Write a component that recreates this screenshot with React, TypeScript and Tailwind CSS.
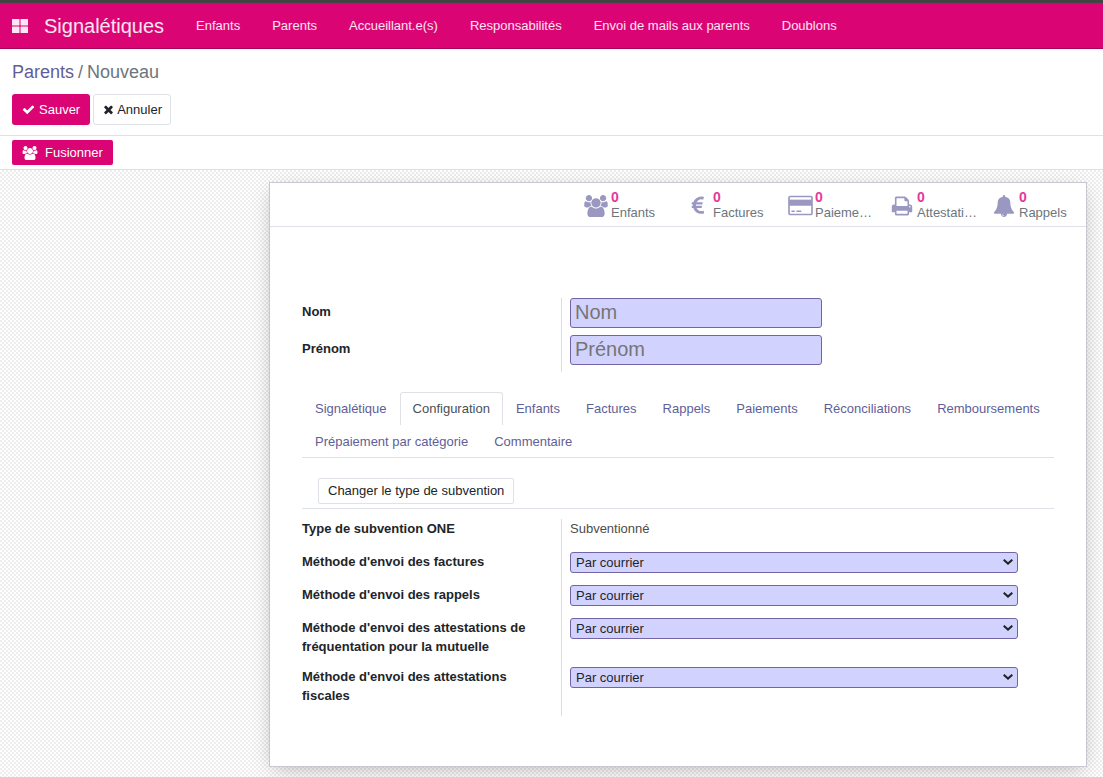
import React from "react";

type IconProps = { className?: string };

const USERS =
  "M657 896q-162 5-265 128h-134q-82 0-138-40.5t-56-118.5q0-353 124-353 6 0 43.5 21t97.5 42.5 119 21.5q67 0 133-23-5 37-5 66 0 139 81 256zm1071 637q0 120-73 189.5t-194 69.5h-874q-121 0-194-69.5t-73-189.5q0-53 3.5-103.5t14-109 26.5-108.5 43-97.5 62-81 85.5-53.5 111.5-20q10 0 43 21.5t73 48 107 48 135 21.5 135-21.5 107-48 73-48 43-21.5q61 0 111.5 20t85.5 53.5 62 81 43 97.5 26.5 108.5 14 109 3.5 103.5zm-1024-1277q0 106-75 181t-181 75-181-75-75-181 75-181 181-75 181 75 75 181zm704 384q0 159-112.5 271.5t-271.5 112.5-271.5-112.5-112.5-271.5 112.5-271.5 271.5-112.5 271.5 112.5 112.5 271.5zm576 225q0 78-56 118.5t-138 40.5h-134q-103-123-265-128 81-117 81-256 0-29-5-66 66 23 133 23 59 0 119-21.5t97.5-42.5 43.5-21q124 0 124 353zm-128-609q0 106-75 181t-181 75-181-75-75-181 75-181 181-75 181 75 75 181z";
const CHECK =
  "M1671 566q0 40-28 68l-724 724-136 136q-28 28-68 28t-68-28l-136-136-362-362q-28-28-28-68t28-68l136-136q28-28 68-28t68 28l294 295 656-657q28-28 68-28t68 28l136 136q28 28 28 68z";
const TIMES =
  "M1490 1322q0 40-28 68l-136 136q-28 28-68 28t-68-28l-294-294-294 294q-28 28-68 28t-68-28l-136-136q-28-28-28-68t28-68l294-294-294-294q-28-28-28-68t28-68l136-136q28-28 68-28t68 28l294 294 294-294q28-28 68-28t68 28l136 136q28 28 28 68t-28 68l-294 294 294 294q28 28 28 68z";
const EURO =
  "M1360 1307l35 159q3 12-3 22.5t-17 14.5l-5 1q-4 2-10.5 3.5t-16 4.5-21.5 5.5-25.5 5-30 5-33.5 4.5-36.5 3-38.5 1q-234 0-409-130.5t-238-351.5h-95q-13 0-22.5-9.5t-9.5-22.5v-113q0-13 9.5-22.5t22.5-9.5h66q-2-57 1-105h-67q-14 0-23-9t-9-23v-114q0-14 9-23t23-9h98q67-210 243.5-338t400.5-128q102 0 194 23 11 3 20 15 6 11 3 24l-43 159q-3 13-14 19.5t-24 2.5l-4-1q-4-1-11.5-2.5l-17.5-3.5-22.5-3.5-26-3-29-2.5-29.5-1q-126 0-226 64t-150 176h468q16 0 25 12 10 12 7 26l-24 114q-5 26-32 26h-488q-3 37 0 105h459q15 0 25 12 9 12 6 27l-24 112q-2 11-11 18.5t-20 7.5h-387q48 117 149.5 185.5t228.5 68.5q18 0 36-1.5t33.5-3.5 29.5-4.5 24.5-5 18.5-4.5l12-3 5-2q13-5 26 2 12 7 15 21z";
const CARD =
  "M1760 128q66 0 113 47t47 113v1216q0 66-47 113t-113 47h-1600q-66 0-113-47t-47-113v-1216q0-66 47-113t113-47h1600zm-1600 128q-13 0-22.5 9.5t-9.5 22.5v224h1664v-224q0-13-9.5-22.5t-22.5-9.5h-1600zm1600 1280q13 0 22.5-9.5t9.5-22.5v-608h-1664v608q0 13 9.5 22.5t22.5 9.5h1600zm-1504-128v-128h256v128h-256zm384 0v-128h384v128h-384z";
const CARD_BAND = "M100 440h1720v456h-1720z";
const PRINT =
  "M448 1536h896v-256h-896v256zm0-640h896v-384h-160q-40 0-68-28t-28-68v-160h-640v640zm1152 64q0-26-19-45t-45-19-45 19-19 45 19 45 45 19 45-19 19-45zm128 0v416q0 13-9.5 22.5t-22.5 9.5h-224v160q0 40-28 68t-68 28h-960q-40 0-68-28t-28-68v-160h-224q-13 0-22.5-9.5t-9.5-22.5v-416q0-79 56.5-135.5t135.5-56.5h64v-544q0-40 28-68t68-28h672q40 0 88 20t76 48l152 152q28 28 48 76t20 88v256h64q79 0 135.5 56.5t56.5 135.5z";
const BELL =
  "M912 1696q0-16-16-16-59 0-101.5-42.5t-42.5-101.5q0-16-16-16t-16 16q0 73 51.5 124.5t124.5 51.5q16 0 16-16zm816-288q0 52-38 90t-90 38h-448q0 106-75 181t-181 75-181-75-75-181h-448q-52 0-90-38t-38-90q50-42 91-88t85-119.5 74.5-158.5 50-206 19.5-260q0-152 117-282.5t307-158.5q-8-19-8-39 0-40 28-68t68-28 68 28 28 68q0 20-8 39 190 28 307 158.5t117 282.5q0 139 19.5 260t50 206 74.5 158.5 85 119.5 91 88z";

function Glyph({ d, box = "0 0 1792 1792", className }: IconProps & { d: string; box?: string }) {
  return (
    <svg viewBox={box} fill="currentColor" aria-hidden="true" className={className}>
      <path d={d} />
    </svg>
  );
}

function CardIcon() {
  return (
    <svg viewBox="0 0 1920 1792" fill="currentColor" aria-hidden="true" className="h-[23px] w-[25px]">
      <path d={CARD} />
      <path d={CARD_BAND} />
    </svg>
  );
}

function AppsIcon() {
  return (
    <svg viewBox="0 0 16 14" fill="currentColor" aria-hidden="true" className="h-[14px] w-4">
      <rect x="0" y="0" width="7.5" height="6.5" rx="0.6" />
      <rect x="8.5" y="0" width="7.5" height="6.5" rx="0.6" />
      <rect x="0" y="7.5" width="7.5" height="6.5" rx="0.6" />
      <rect x="8.5" y="7.5" width="7.5" height="6.5" rx="0.6" />
    </svg>
  );
}

const menus = ["Enfants", "Parents", "Accueillant.e(s)", "Responsabilités", "Envoi de mails aux parents", "Doublons"];

const stats = [
  { label: "Enfants", icon: <Glyph d={USERS} box="0 0 2048 1792" className="h-[22px] w-[26px]" /> },
  { label: "Factures", icon: <Glyph d={EURO} className="size-[22px]" /> },
  { label: "Paiements", icon: <CardIcon /> },
  { label: "Attestations", icon: <Glyph d={PRINT} className="size-[22px]" /> },
  { label: "Rappels", icon: <Glyph d={BELL} className="size-[22px]" /> },
];

const tabs = [
  "Signalétique",
  "Configuration",
  "Enfants",
  "Factures",
  "Rappels",
  "Paiements",
  "Réconciliations",
  "Remboursements",
  "Prépaiement par catégorie",
  "Commentaire",
];

const methods = [
  { id: "factures", label: "Méthode d'envoi des factures" },
  { id: "rappels", label: "Méthode d'envoi des rappels" },
  { id: "mutuelle", label: "Méthode d'envoi des attestations de fréquentation pour la mutuelle" },
  { id: "fiscales", label: "Méthode d'envoi des attestations fiscales" },
];

function NameField({ id, label }: { id: string; label: string }) {
  return (
    <div className="flex h-[37px]">
      <label htmlFor={id} className="w-[259px] shrink-0 pt-1 font-bold">
        {label}
      </label>
      <div className="flex-1 border-l border-[#ddd] pl-2">
        <input
          id={id}
          type="text"
          placeholder={label}
          className="block h-[30px] w-[252px] rounded-[3px] border border-[#7264a5] bg-[#d2d2ff] px-1 pb-[2px] text-xl placeholder:text-[#757575]"
        />
      </div>
    </div>
  );
}

function MethodField({ id, label }: { id: string; label: string }) {
  return (
    <div className="flex min-h-[33px]">
      <label htmlFor={id} className="w-[259px] shrink-0 pr-4 pb-[11px] font-bold">
        {label}
      </label>
      <div className="flex-1 border-l border-[#ddd] pr-9 pl-2">
        <div className="relative">
          <select
            id={id}
            defaultValue="courrier"
            className="block h-[21px] w-full appearance-none rounded-[3px] border border-[#7264a5] bg-[#d2d2ff] px-[5px] leading-[19px]"
          >
            <option value="courrier">Par courrier</option>
            <option value="mail">Par mail</option>
          </select>
          <svg
            viewBox="0 0 10 6"
            fill="none"
            stroke="currentColor"
            strokeWidth="2"
            aria-hidden="true"
            className="pointer-events-none absolute top-[7px] right-[5px] h-[6px] w-[10px]"
          >
            <path d="M0.7 0.7 L5 4.6 L9.3 0.7" />
          </svg>
        </div>
      </div>
    </div>
  );
}

export default function App() {
  return (
    <div className="flex min-h-screen flex-col bg-white font-['Liberation_Sans',Arial,sans-serif] text-[13px] leading-[19px] text-[#212529]">
      <header className="flex h-[49px] items-center border-t-[3px] border-b border-t-[#434343] border-b-[#a3055c] bg-[#da0475] text-white/90">
        <button type="button" aria-label="Applications" className="pr-4 pl-3">
          <AppsIcon />
        </button>
        <a href="#signaletiques" className="pr-4 text-xl">
          Signalétiques
        </a>
        <nav className="flex">
          {menus.map((m) => (
            <a key={m} href="#menu" className="px-4">
              {m}
            </a>
          ))}
        </nav>
      </header>

      <div className="border-b border-[#dee2e6] px-3 pt-3 pb-[10px]">
        <nav className="flex gap-1 text-lg leading-[22px] text-[#6c757d]">
          <a href="#parents" className="text-[#5f5e97]">
            Parents
          </a>
          <span>/</span>
          <span>Nouveau</span>
        </nav>
        <div className="mt-[11px] flex gap-[3px]">
          <button type="button" className="flex h-[31px] items-center gap-1 rounded-[3px] bg-[#da0475] px-[10px] text-white">
            <Glyph d={CHECK} className="size-[13px]" />
            Sauver
          </button>
          <button type="button" className="flex h-[31px] items-center gap-[2px] rounded-[3px] border border-[#dee2e6] px-2">
            <Glyph d={TIMES} className="size-[13px]" />
            Annuler
          </button>
        </div>
      </div>

      <div className="border-b border-[#dee2e6] px-3 py-1">
        <button type="button" className="flex h-[25px] items-center gap-[7px] rounded-[2px] bg-[#da0475] px-[10px] text-white">
          <Glyph d={USERS} box="0 0 2048 1792" className="h-[14px] w-4" />
          Fusionner
        </button>
      </div>

      <main className="flex flex-1 justify-end bg-white bg-[repeating-conic-gradient(#ededed_0_25%,#ffffff_0_50%)] bg-[length:4px_4px] pt-3 pr-4 pb-[10px]">
        <section className="flex w-[818px] flex-col border border-[#c8c8d3] bg-white shadow-[0_5px_20px_-5px_rgba(0,0,0,0.3)]">
          <div className="flex h-11 justify-end border-b border-[#dee2e6] pr-[3px]">
            {stats.map((s) => (
              <button key={s.label} type="button" className="flex w-[102px] items-center text-left">
                <span className="flex w-[38px] shrink-0 justify-center pt-[2px] pl-2 text-[#9a98c1]">{s.icon}</span>
                <span className="flex min-w-0 flex-col leading-[15px]">
                  <span className="text-sm leading-[15px] font-bold text-[#e6399b]">0</span>
                  <span className="w-[60px] truncate text-[#6c757d]">{s.label}</span>
                </span>
              </button>
            ))}
          </div>

          <div className="px-8 pt-[71px] pb-[50px]">
            <NameField id="nom" label="Nom" />
            <NameField id="prenom" label="Prénom" />

            <div className="mt-5 border-b border-[#dee2e6]">
              <div role="tablist" className="-mb-px flex flex-wrap">
                {tabs.map((t) => (
                  <button
                    key={t}
                    type="button"
                    role="tab"
                    aria-selected={t === "Configuration"}
                    className={
                      t === "Configuration"
                        ? "h-[33px] rounded-t-[3px] border border-b-0 border-[#dee2e6] px-3 pb-px text-[#495057]"
                        : "h-[33px] px-[13px] text-[#5f5e97]"
                    }
                  >
                    {t}
                  </button>
                ))}
              </div>
            </div>

            <div className="border-b border-[#dee2e6] px-4 pt-5 pb-1">
              <button type="button" className="h-[26px] rounded-[2px] border border-[#dee2e6] px-[9px] pb-[2px]">
                Changer le type de subvention
              </button>
            </div>

            <div className="mt-[10px]">
              <div className="flex h-[33px]">
                <span className="w-[259px] shrink-0 font-bold">Type de subvention ONE</span>
                <span className="flex-1 border-l border-[#ddd] pl-2 text-[#4c4c4c]">Subventionné</span>
              </div>
              {methods.map((m) => (
                <MethodField key={m.id} id={m.id} label={m.label} />
              ))}
            </div>
          </div>
        </section>
      </main>
    </div>
  );
}
